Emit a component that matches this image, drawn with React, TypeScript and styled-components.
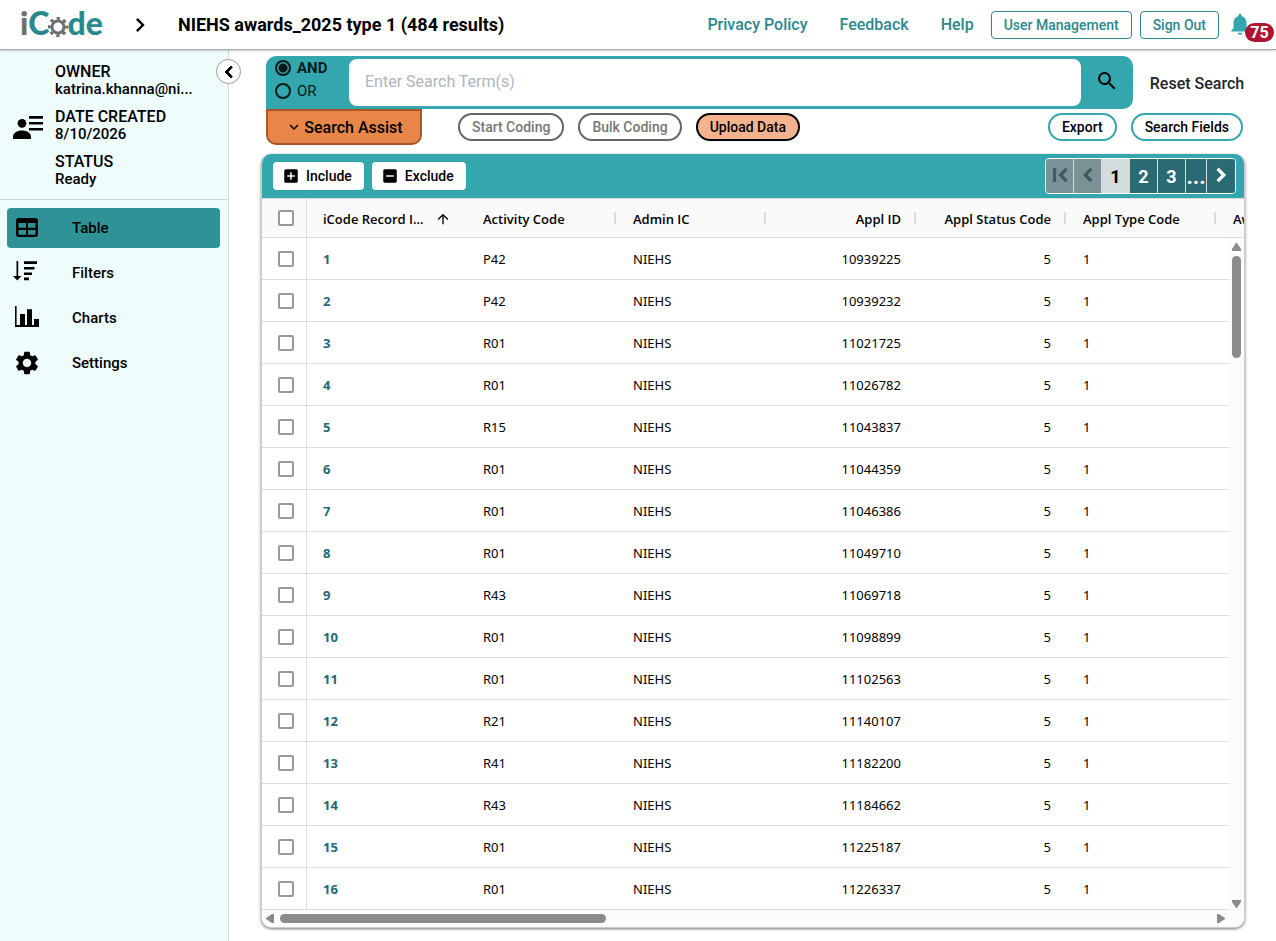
import React from 'react';
import styled, { createGlobalStyle } from 'styled-components';
import {
  MdSettings, MdSearch, MdNotifications, MdChevronLeft, MdChevronRight, MdFirstPage,
  MdArrowUpward, MdAddBox, MdIndeterminateCheckBox, MdExpandMore,
} from 'react-icons/md';

const teal = '#34a6ad';
const darkTeal = '#2b888d';
const line = '#dddddd';

const GlobalStyle = createGlobalStyle`
  * { box-sizing: border-box; }
  html, body, #root { height: 100%; }
  body { margin: 0; background: #fff; color: #000; font-family: Roboto, sans-serif; font-size: 16px; }
  button, input { font-family: inherit; }
  button { cursor: pointer; color: inherit; }
`;

const Page = styled.div`
  display: flex; flex-direction: column; height: 100vh; overflow: hidden;
`;
const Header = styled.header`
  display: flex; align-items: center; flex: none; height: 50px; padding-left: 20px;
  border-bottom: 1px solid #aaa; box-shadow: 0 1px 2px #0003; position: relative; z-index: 1; background: #fff;
`;
const Logo = styled.a`
  display: flex; align-items: center; width: 84px; height: 36px; padding-bottom: 4px; text-decoration: none;
  font: 900 32px/32px Lato, sans-serif; color: ${darkTeal};
  svg { flex: none; margin: 8px -2px 0 -2px; }
`;
const LogoGrey = styled.span` color: #6d6e71; `;
const Crumb = styled(MdChevronRight)` width: 28px; height: 28px; margin-left: 22px; `;
const Title = styled.h1` margin: 0 0 0 24px; font-size: 18px; line-height: 24px; font-weight: 700; white-space: nowrap; `;
const Links = styled.nav` display: flex; gap: 32px; margin-left: auto; padding-right: 17px; `;
const NavLink = styled.a` color: ${darkTeal}; font-weight: 500; line-height: 24px; text-decoration: none; white-space: nowrap; `;
const Outline = styled.button`
  height: 28px; padding: 0 12px; margin-right: 8px; border: 1px solid ${darkTeal}; border-radius: 4px;
  background: #fff; color: ${darkTeal}; font-size: 14px; font-weight: 500; white-space: nowrap;
`;
const Bell = styled.button`
  position: relative; width: 49px; height: 40px; padding: 0; border: 0; background: none; color: ${teal};
  svg { position: absolute; left: 0; top: 6px; width: 26px; height: 26px; }
`;
const Badge = styled.span`
  position: absolute; right: 2px; top: 18px; width: 29px; height: 19px; border-radius: 10px; background: #ae1531;
  color: #fff; font-size: 16px; line-height: 19px; font-weight: 700;
`;

const Body = styled.div` display: flex; flex: 1; min-height: 0; `;
const Side = styled.aside`
  position: relative; flex: none; width: 229px; border-right: 1px solid #ccdada; background: #effcfc;
`;
const Collapse = styled.button`
  position: absolute; right: -13px; top: 9px; display: grid; place-items: center; width: 25px; height: 25px;
  padding: 0; border: 1px solid #999; border-radius: 50%; background: #fff;
  svg { width: 24px; height: 24px; flex: none; }
  path:not([fill='none']) { stroke: currentColor; stroke-width: 1; }
`;
const Owner = styled.section`
  display: flex; align-items: center; gap: 12px; height: 150px; padding: 1px 0 0 13px; border-bottom: 1px solid #ccdada;
  > svg { width: 30px; height: 30px; flex: none; }
`;
const Facts = styled.dl` display: grid; gap: 10px; margin: 0; `;
const Fact = styled.div` font-weight: 500; line-height: 18px; `;
const Term = styled.dt` font-size: 16px; `;
const Value = styled.dd` margin: 0; font-size: 15px; line-height: 17px; white-space: nowrap; `;
const Menu = styled.nav` display: grid; gap: 5px; padding: 8px 8px 0 7px; `;
const MenuItem = styled.a<{ $active?: boolean }>`
  display: flex; align-items: center; height: 40px; gap: 31px; padding-left: 6px; border-radius: 4px;
  background: ${p => (p.$active ? '#2e9297' : 'transparent')}; color: #000; font-size: 15px; font-weight: 500; text-decoration: none;
  svg { width: 28px; height: 28px; flex: none; }
`;

const Main = styled.main` flex: 1; min-width: 0; display: flex; flex-direction: column; padding: 6px 31px 13px 32px; `;
const SearchRow = styled.div` display: flex; align-items: center; padding-left: 5px; gap: 16px; `;
const SearchBar = styled.form`
  display: flex; flex: 1; height: 53px; padding: 3px 0; border-radius: 10px 10px 10px 0; background: ${teal};
`;
const Modes = styled.div` width: 83px; padding-left: 9px; `;
const Mode = styled.label<{ $bold?: boolean }>`
  display: flex; align-items: center; gap: 6px; height: 23px; margin-top: -3px;
  font-size: 15px; font-weight: ${p => (p.$bold ? 700 : 400)}; color: #0b1a1b;
  & + & { margin-top: 0; }
`;
const Radio = styled.input`
  appearance: none; width: 16px; height: 16px; margin: 0; border: 2px solid #0b1a1b; border-radius: 50%;
  &:checked { background: radial-gradient(circle, #0b1a1b 4px, transparent 5px); }
`;
const SearchInput = styled.input`
  flex: 1; min-width: 0; border: 0; border-radius: 8px; padding: 0 16px 2px; background: #fff; font-size: 16px; outline: 0;
  &::placeholder { color: #adb5bd; }
`;
const SearchButton = styled.button`
  width: 52px; padding: 0; border: 0; background: none;
  svg { width: 24px; height: 24px; }
`;
const Reset = styled.button` min-width: 96px; padding: 2px 0 0; border: 0; background: none; font-size: 16px; font-weight: 500; color: #212529; white-space: nowrap; `;
const Actions = styled.div` display: flex; align-items: center; height: 36px; padding: 0 2px 0 5px; gap: 14px; `;
const Assist = styled.button`
  display: flex; align-items: center; justify-content: center; gap: 1px; width: 156px; height: 36px; margin-right: 22px;
  border: 2px solid #ab5628; border-radius: 0 0 10px 10px; background: #e88549; font-size: 16px; font-weight: 500;
  svg { width: 18px; height: 18px; }
`;
const pills = {
  muted: ['#666', '#fff', '#777'],
  warm: ['#000', '#f4b28f', '#000'],
  plain: [teal, '#fff', '#000'],
};
const Pill = styled.button<{ $kind: keyof typeof pills }>`
  height: 28px; padding: 0 12px; border: 2px solid ${p => pills[p.$kind][0]}; border-radius: 14px;
  background: ${p => pills[p.$kind][1]}; color: ${p => pills[p.$kind][2]}; font-size: 14px; font-weight: 500; white-space: nowrap;
`;
const Spacer = styled.span` flex: 1; `;

const Panel = styled.section`
  display: flex; flex-direction: column; flex: 1; min-height: 0; margin-top: 9px; overflow: hidden;
  border-radius: 10px; background: #fff; box-shadow: 0 1px 3px #0008; border: 1px solid #ccc; border-top: 0;
`;
const Toolbar = styled.div`
  display: flex; align-items: center; gap: 8px; flex: none; height: 44px; margin: 0 -1px; padding: 0 9px 0 12px; background: ${teal};
`;
const Tool = styled.button`
  display: flex; align-items: center; gap: 6px; height: 28px; padding: 0 12px 0 9px; border: 0; border-radius: 4px;
  background: #fff; font-size: 14px; font-weight: 500;
  svg { width: 18px; height: 18px; }
`;
const Pager = styled.nav`
  display: flex; height: 36px; margin-left: auto; border: 1px solid #fff; border-radius: 4px; overflow: hidden;
`;
const PageButton = styled.button<{ $state?: 'off' | 'current'; $narrow?: boolean }>`
  display: grid; place-items: center; width: ${p => (p.$narrow ? 21 : 28)}px; padding: 0; border: 0; border-right: 1px solid #d3dbdc;
  background: ${p => (p.$state === 'off' ? '#7a9297' : p.$state === 'current' ? '#d3dbdc' : '#2a6a72')};
  color: ${p => (p.$state === 'off' ? '#405a60' : p.$state === 'current' ? '#000' : '#fff')};
  font-size: ${p => (p.$narrow ? 22 : 18)}px; font-weight: 700;
  &:last-child { border-right: 0; }
  svg { width: 26px; height: 26px; margin-bottom: 2px; }
  path:not([fill='none']) { stroke: currentColor; stroke-width: 1; }
`;

const Clip = styled.div` overflow: hidden; flex: none; background: #fafafa; `;
const Grid = styled.table`
  table-layout: fixed; width: 1104px; border-collapse: separate; border-spacing: 0;
  font-family: "Noto Sans", sans-serif; font-size: 13px; color: #000;
`;
const Th = styled.th<{ $right?: boolean; $bar?: boolean }>`
  position: relative; height: 40px; padding: 2px 16px 0 16px; border-bottom: 1px solid ${line}; border-top: 1px solid ${line};
  text-align: ${p => (p.$right ? 'right' : 'left')}; font-family: "Open Sans", sans-serif; font-weight: 600; white-space: nowrap;
  &::after { content: ''; display: ${p => (p.$bar ? 'block' : 'none')}; position: absolute; right: 1px; top: 13px; width: 2px; height: 12px; background: ${line}; }
`;
const SortHead = styled.span` display: flex; align-items: center; justify-content: space-between; width: 128px; svg { width: 16px; height: 16px; } `;
const CheckHead = styled.th` width: 45px; height: 40px; padding: 0; border: solid ${line}; border-width: 1px 1px 1px 0; `;
const CheckCell = styled.td` padding: 0; border: solid ${line}; border-width: 0 1px 1px 0; `;
const Check = styled.input`
  appearance: none; display: block; width: 16px; height: 16px; margin: 0 auto 0 16px; border: 2px solid #999; border-radius: 2px; background: #fff;
`;
const Td = styled.td<{ $right?: boolean }>`
  height: 42px; padding: 0 16px; border-bottom: 1px solid ${line}; text-align: ${p => (p.$right ? 'right' : 'left')};
`;
const RecordLink = styled.a` color: #256a72; font-weight: 700; text-decoration: none; `;
const GridBody = styled.div` display: flex; flex: 1; min-height: 0; `;
const Rows = styled.div` flex: 1; min-width: 0; overflow: hidden; `;
const VScroll = styled.div`
  display: flex; flex-direction: column; align-items: center; width: 15px; padding: 5px 0 2px; background: #fcfcfc;
`;
const HScroll = styled.div` display: flex; align-items: center; flex: none; height: 17px; padding: 0 19px 0 4px; background: #fcfcfc; `;
const Thumb = styled.span<{ $vertical?: boolean }>`
  display: block; width: ${p => (p.$vertical ? '9px' : '34%')}; height: ${p => (p.$vertical ? '102px' : '9px')};
  margin: ${p => (p.$vertical ? '5px 0 auto' : '0 auto 0 6px')}; border-radius: 5px; background: #8b8b8b;
`;
const Tri = styled.svg` display: block; flex: none; fill: #8b8b8b; `;

const Gear = () => (
  <svg width="22" height="22" viewBox="0 0 22 22" fill="none" stroke="#6d6e71">
    <circle cx="11" cy="11" r="6" strokeWidth="3" />
    <circle cx="11" cy="11" r="8.6" strokeWidth="3" strokeDasharray="3.2 3.554" strokeDashoffset="1.6" />
  </svg>
);
const PersonIcon = () => (
  <svg viewBox="0 0 30 30"><circle cx="9" cy="13.3" r="4.4" /><path d="M0 29v-2c0-4 4-6.5 9-6.5s9 2.5 9 6.5v2Z M16 6h14v2.7H16Z M16 12h14v2.6H16Z M16 18h14v2.6H16Z" /></svg>
);
const TableIcon = () => (
  <svg viewBox="2 0 28 28"><path fillRule="evenodd" d="M8 4h16a3 3 0 0 1 3 3v13a3 3 0 0 1-3 3H8a3 3 0 0 1-3-3V7a3 3 0 0 1 3-3Z M7.5 9v4.7H15V9Z M17 9v4.7h7.5V9Z M7.5 16v3.7a1 1 0 0 0 1 1H15V16Z M17 16v4.7h6.500a1 1 0 0 0 1-1V16Z" /></svg>
);
const SortIcon = () => (
  <svg viewBox="2 0 28 28"><path d="M5.5 2h1.7v15H10.500l-4.200 4.500L2 17h3.500Z M13 2.300h13V5H13Z M13 8h10.500v2.500H13Z M13 13.400h8V16h-8Z M13 18.600h5v2.600h-5Z" /></svg>
);
const ChartIcon = () => (
  <svg viewBox="2 0 28 28"><path d="M4 2h1.600v19H9V10h5v11h2V5.300h5V21h2v-6h5v8H4Z" /></svg>
);

const rows: [string, string][] = [
  ['P42', '10939225'], ['P42', '10939232'], ['R01', '11021725'], ['R01', '11026782'],
  ['R15', '11043837'], ['R01', '11044359'], ['R01', '11046386'], ['R01', '11049710'],
  ['R43', '11069718'], ['R01', '11098899'], ['R01', '11102563'], ['R21', '11140107'],
  ['R41', '11182200'], ['R43', '11184662'], ['R01', '11225187'], ['R01', '11226337'],
];
const facts = [['OWNER', 'katrina.khanna@ni...'], ['DATE CREATED', '8/10/2026'], ['STATUS', 'Ready']];
const columnWidths = [45, 160, 150, 150, 150, 150, 150, 149];

const Columns = () => (
  <colgroup>
    {columnWidths.map((width, i) => <col key={i} style={{ width }} />)}
  </colgroup>
);

export default function App() {
  return (
    <Page>
      <GlobalStyle />
      <Header>
        <Logo href="#" aria-label="iCode"><LogoGrey>i</LogoGrey>C<Gear />de</Logo>
        <Crumb />
        <Title>NIEHS awards_2025 type 1 (484 results)</Title>
        <Links>
          <NavLink href="#privacy">Privacy Policy</NavLink>
          <NavLink href="#feedback">Feedback</NavLink>
          <NavLink href="#help">Help</NavLink>
        </Links>
        <Outline>User Management</Outline>
        <Outline>Sign Out</Outline>
        <Bell aria-label="Notifications"><MdNotifications /><Badge>75</Badge></Bell>
      </Header>
      <Body>
        <Side>
          <Collapse aria-label="Collapse sidebar"><MdChevronLeft /></Collapse>
          <Owner>
            <PersonIcon />
            <Facts>
              {facts.map(([term, value]) => <Fact key={term}><Term>{term}</Term><Value>{value}</Value></Fact>)}
            </Facts>
          </Owner>
          <Menu>
            <MenuItem href="#table" $active><TableIcon />Table</MenuItem>
            <MenuItem href="#filters"><SortIcon />Filters</MenuItem>
            <MenuItem href="#charts"><ChartIcon />Charts</MenuItem>
            <MenuItem href="#settings"><MdSettings />Settings</MenuItem>
          </Menu>
        </Side>
        <Main>
          <SearchRow>
            <SearchBar onSubmit={e => e.preventDefault()}>
              <Modes>
                <Mode $bold><Radio type="radio" name="mode" defaultChecked />AND</Mode>
                <Mode><Radio type="radio" name="mode" />OR</Mode>
              </Modes>
              <SearchInput aria-label="Search terms" placeholder="Enter Search Term(s)" />
              <SearchButton aria-label="Search"><MdSearch /></SearchButton>
            </SearchBar>
            <Reset>Reset Search</Reset>
          </SearchRow>
          <Actions>
            <Assist><MdExpandMore />Search Assist</Assist>
            <Pill $kind="muted">Start Coding</Pill>
            <Pill $kind="muted">Bulk Coding</Pill>
            <Pill $kind="warm">Upload Data</Pill>
            <Spacer />
            <Pill $kind="plain">Export</Pill>
            <Pill $kind="plain">Search Fields</Pill>
          </Actions>
          <Panel>
            <Toolbar>
              <Tool><MdAddBox />Include</Tool>
              <Tool><MdIndeterminateCheckBox />Exclude</Tool>
              <Pager aria-label="Pages">
                <PageButton $state="off" aria-label="First page"><MdFirstPage /></PageButton>
                <PageButton $state="off" aria-label="Previous page"><MdChevronLeft /></PageButton>
                <PageButton $state="current">1</PageButton>
                <PageButton>2</PageButton>
                <PageButton>3</PageButton>
                <PageButton $narrow>...</PageButton>
                <PageButton aria-label="Next page"><MdChevronRight /></PageButton>
              </Pager>
            </Toolbar>
            <Clip>
              <Grid>
                <Columns />
                <thead>
                  <tr>
                    <CheckHead><Check type="checkbox" aria-label="Select all" /></CheckHead>
                    <Th><SortHead>iCode Record I...<MdArrowUpward /></SortHead></Th>
                    <Th $bar>Activity Code</Th>
                    <Th $bar>Admin IC</Th>
                    <Th $right $bar>Appl ID</Th>
                    <Th $right $bar>Appl Status Code</Th>
                    <Th $bar>Appl Type Code</Th>
                    <Th>Aw</Th>
                  </tr>
                </thead>
              </Grid>
            </Clip>
            <GridBody>
              <Rows>
                <Grid>
                  <Columns />
                  <tbody>
                    {rows.map(([code, id], i) => (
                      <tr key={id}>
                        <CheckCell><Check type="checkbox" aria-label={`Select record ${i + 1}`} /></CheckCell>
                        <Td><RecordLink href={`#record-${i + 1}`}>{i + 1}</RecordLink></Td>
                        <Td>{code}</Td>
                        <Td>NIEHS</Td>
                        <Td $right>{id}</Td>
                        <Td $right>5</Td>
                        <Td>1</Td>
                        <Td />
                      </tr>
                    ))}
                  </tbody>
                </Grid>
              </Rows>
              <VScroll>
                <Tri width="9" height="8" viewBox="0 0 9 8"><path d="M4 0h1l4 6v2H0V6Z" /></Tri>
                <Thumb $vertical />
                <Tri width="9" height="8" viewBox="0 0 9 8"><path d="M0 0h9v2L5 8H4L0 2Z" /></Tri>
              </VScroll>
            </GridBody>
            <HScroll>
              <Tri width="8" height="9" viewBox="0 0 8 9"><path d="M8 0v9H6L0 5V4L6 0Z" /></Tri>
              <Thumb />
              <Tri width="8" height="9" viewBox="0 0 8 9"><path d="M0 0h2l6 4v1L2 9H0Z" /></Tri>
            </HScroll>
          </Panel>
        </Main>
      </Body>
    </Page>
  );
}
